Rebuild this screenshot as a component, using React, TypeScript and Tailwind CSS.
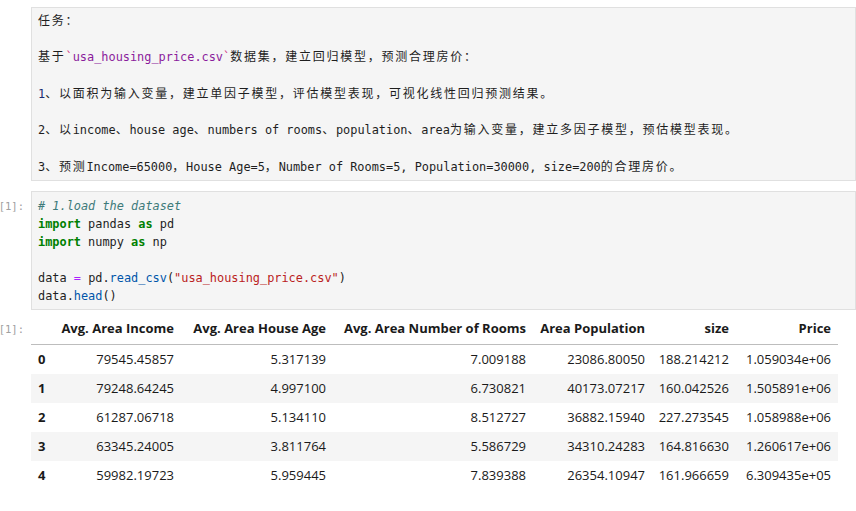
import type { ReactNode } from "react";

const CJK_SPLIT = /([\u3000-\u303f\u4e00-\u9fff\uff00-\uffef]+)/;
const CJK_ONLY = /^[\u3000-\u303f\u4e00-\u9fff\uff00-\uffef]+$/;

// mixed mono + chinese text, chinese gets its own font and spacing
function Mixed({ text }: { text: string }): JSX.Element {
  return (
    <>
      {text.split(CJK_SPLIT).map((part, i) =>
        CJK_ONLY.test(part) ? (
          <span
            key={i}
            className="font-['Noto_Sans_CJK_SC',sans-serif] text-[12px] leading-[12px] tracking-[1.75px]"
          >
            {part}
          </span>
        ) : (
          <span key={i}>{part}</span>
        )
      )}
    </>
  );
}

function Prompt({ children }: { children: ReactNode }): JSX.Element {
  return (
    <div className="w-[31px] shrink-0 flex justify-end pr-[7px] text-[10.5px] text-[#a0a0a0] whitespace-nowrap">
      {children}
    </div>
  );
}

const columns = ["Avg. Area Income", "Avg. Area House Age", "Avg. Area Number of Rooms", "Area Population", "size", "Price"];

const rows = [
  ["79545.45857", "5.317139", "7.009188", "23086.80050", "188.214212", "1.059034e+06"],
  ["79248.64245", "4.997100", "6.730821", "40173.07217", "160.042526", "1.505891e+06"],
  ["61287.06718", "5.134110", "8.512727", "36882.15940", "227.273545", "1.058988e+06"],
  ["63345.24005", "3.811764", "5.586729", "34310.24283", "164.816630", "1.260617e+06"],
  ["59982.19723", "5.959445", "7.839388", "26354.10947", "161.966659", "6.309435e+05"],
];

const gridCols = "grid grid-cols-[21px_129px_152px_200px_119px_84px_102px] items-center";

export default function App(): JSX.Element {
  return (
    <div className="w-[856px] h-[511px] overflow-hidden bg-white pt-[7px] font-['DejaVu_Sans_Mono',monospace] text-[11.9px] text-[#1e1e1e]">
      {/* markdown cell (edit mode) */}
      <div className="flex">
        <div className="w-[31px] shrink-0" />
        <div className="flex-1 border border-[#e0e0e0] bg-[#f5f5f5] pl-[6px] pt-[4px] pb-[4px] leading-[18.2px] whitespace-pre">
          <div>
            <Mixed text="任务：" />
          </div>
          <div>&nbsp;</div>
          <div>
            <Mixed text="基于" />
            <span className="text-[#d1307f]">`</span>
            <span className="text-[#8b1c9c]">usa_housing_price.csv</span>
            <span className="text-[#d1307f]">`</span>
            <Mixed text="数据集，建立回归模型，预测合理房价：" />
          </div>
          <div>&nbsp;</div>
          <div>
            <span className="text-[#1c2d73]">1</span>
            <Mixed text="、以面积为输入变量，建立单因子模型，评估模型表现，可视化线性回归预测结果。" />
          </div>
          <div>&nbsp;</div>
          <div>
            <Mixed text="2、以income、house age、numbers of rooms、population、area为输入变量，建立多因子模型，预估模型表现。" />
          </div>
          <div>&nbsp;</div>
          <div>
            <Mixed text="3、预测Income=65000，House Age=5，Number of Rooms=5, Population=30000, size=200的合理房价。" />
          </div>
        </div>
      </div>

      {/* code cell */}
      <div className="flex mt-[10px] leading-[18px]">
        <Prompt>
          <span className="pt-[6px]">[1]:</span>
        </Prompt>
        <div className="flex-1 border border-[#e0e0e0] bg-[#f5f5f5] pl-[6px] pt-[5px] pb-[4px] whitespace-pre">
          <div className="italic text-[#3d7a7a]"># 1.load the dataset</div>
          <div>
            <span className="font-bold text-[#008000]">import</span> pandas <span className="font-bold text-[#008000]">as</span> pd
          </div>
          <div>
            <span className="font-bold text-[#008000]">import</span> numpy <span className="font-bold text-[#008000]">as</span> np
          </div>
          <div>&nbsp;</div>
          <div>
            data <span className="text-[#aa22ff]">=</span> pd.<span className="text-[#0055aa]">read_csv</span>(
            <span className="text-[#ba2121]">"usa_housing_price.csv"</span>)
          </div>
          <div>
            data.<span className="text-[#0055aa]">head</span>()
          </div>
        </div>
      </div>

      {/* output: dataframe */}
      <div className="flex mt-[5px]">
        <Prompt>
          <span className="leading-[29px]">[1]:</span>
        </Prompt>
        <div className="font-['Open_Sans',sans-serif] text-[13px] text-[#1a1a1a]">
          <div className={`${gridCols} h-[30px] border-b border-[#bdbdbd] font-bold pb-[1px]`}>
            <div />
            {columns.map((c) => (
              <div key={c} className="text-right pr-[7px] whitespace-nowrap">
                {c}
              </div>
            ))}
          </div>
          {rows.map((r, i) => (
            <div key={i} className={`${gridCols} h-[29px] ${i % 2 === 1 ? "bg-[#f5f5f5]" : ""}`}>
              <div className="pl-[7px] font-bold">{i}</div>
              {r.map((v, j) => (
                <div key={j} className="text-right pr-[7px] whitespace-nowrap">
                  {v}
                </div>
              ))}
            </div>
          ))}
        </div>
      </div>
    </div>
  );
}
